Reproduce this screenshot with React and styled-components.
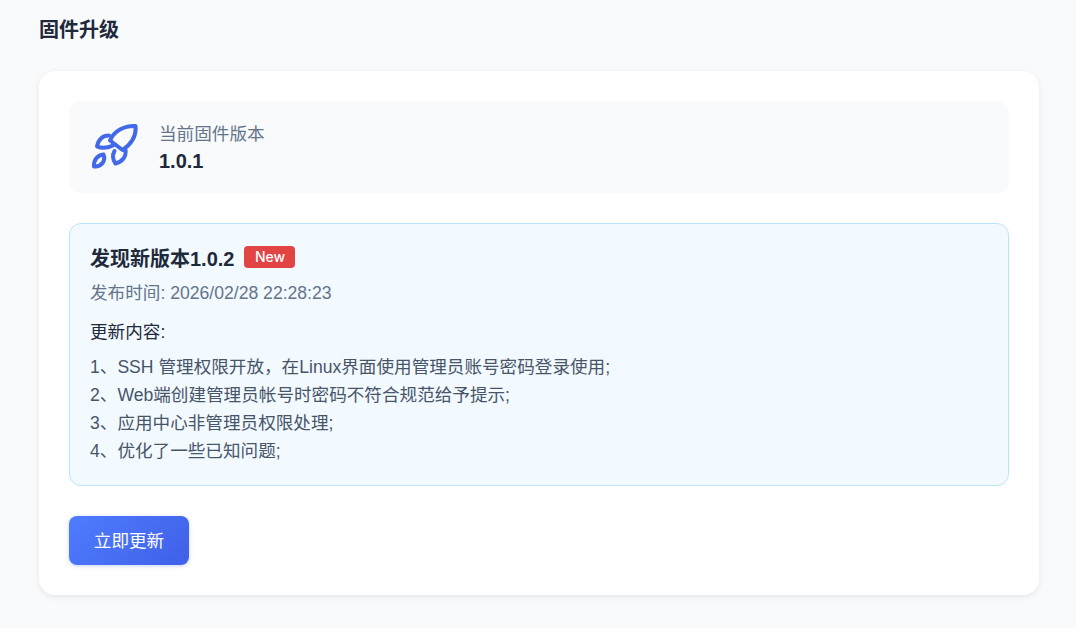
import React from "react";
import styled, { createGlobalStyle } from "styled-components";

const notes = [
  "1、SSH 管理权限开放，在Linux界面使用管理员账号密码登录使用;",
  "2、Web端创建管理员帐号时密码不符合规范给予提示;",
  "3、应用中心非管理员权限处理;",
  "4、优化了一些已知问题;",
];

const App = () => {
  return (
    <>
      <GlobalStyle />
      <Page>
        <Title>固件升级</Title>
        <Card>
          <Current>
            <RocketIcon viewBox="91 123 48 48" fill="none">
              <path d="M135.500 126C136.500 135 132 143.500 122.500 150L110 140.500C114 131 124 125.500 135.500 126Z" />
              <path d="M109 135.500C103 135.500 98.500 139.500 97 146.500C101.500 148.500 107.500 148 113 145.500" />
              <path d="M125.500 150C126.500 156.500 122.500 161.500 115.500 163.500C113 160 112 155.500 114.500 151" />
              <path d="M94 166.500C93.500 160 97.500 155 103.500 154.500C106 160.500 101.500 167 94 166.500Z" />
            </RocketIcon>
            <div>
              <CurrentLabel>当前固件版本</CurrentLabel>
              <CurrentValue>1.0.1</CurrentValue>
            </div>
          </Current>
          <Update>
            <UpdateHead>
              <UpdateTitle>发现新版本1.0.2</UpdateTitle>
              <Badge>New</Badge>
            </UpdateHead>
            <Published>发布时间: 2026/02/28 22:28:23</Published>
            <NotesTitle>更新内容:</NotesTitle>
            {notes.map((note) => (
              <Note key={note}>{note}</Note>
            ))}
          </Update>
          <UpdateButton>立即更新</UpdateButton>
        </Card>
      </Page>
    </>
  );
};

export default App;

const GlobalStyle = createGlobalStyle`
  html, body {
    margin: 0;
    padding: 0;
    background: #f8fafc;
  }
  body {
    font-family: "Liberation Sans", "Noto Sans CJK SC", sans-serif;
  }
  * {
    box-sizing: border-box;
  }
`;
const Page = styled.div`
  width: 1076px;
  height: 628px;
  padding: 15px 37px 0 39px;
  overflow: hidden;
`;
const Title = styled.div`
  height: 30px;
  line-height: 30px;
  font-size: 20px;
  font-weight: 700;
  color: #1e293b;
  margin-bottom: 26px;
`;
const Card = styled.div`
  width: 1000px;
  height: 524px;
  padding: 30px;
  background: #fff;
  border-radius: 16px;
  box-shadow: 0 2px 6px rgba(15, 23, 42, 0.08);
`;
const Current = styled.div`
  height: 92px;
  display: flex;
  align-items: center;
  gap: 20px;
  padding: 0 22px;
  background: #f8fafc;
  border-radius: 12px;
  margin-bottom: 30px;
`;
const RocketIcon = styled.svg`
  width: 48px;
  height: 48px;
  flex-shrink: 0;
  stroke: #4169e8;
  stroke-width: 4;
  stroke-linecap: round;
  stroke-linejoin: round;
`;
const CurrentLabel = styled.div`
  font-size: 17.6px;
  line-height: 28px;
  padding-top: 1px;
  color: #64748b;
`;
const CurrentValue = styled.div`
  font-size: 20px;
  line-height: 27px;
  font-weight: 700;
  color: #1e293b;
`;
const Update = styled.div`
  height: 263px;
  padding: 19px 20px 20px;
  background: #f2f9ff;
  border: 1px solid #bae6fd;
  border-radius: 12px;
  margin-bottom: 30px;
`;
const UpdateHead = styled.div`
  display: flex;
  align-items: center;
  gap: 10px;
  height: 28px;
  margin-bottom: 8px;
`;
const UpdateTitle = styled.div`
  font-size: 20px;
  font-weight: 700;
  color: #1e293b;
`;
const Badge = styled.span`
  width: 51px;
  height: 22px;
  line-height: 22px;
  text-align: center;
  font-family: Inter, "Liberation Sans", sans-serif;
  font-size: 14px;
  font-weight: 500;
  color: #fff;
  background: #e24343;
  border-radius: 4px;
`;
const Published = styled.div`
  font-size: 17.6px;
  line-height: 28px;
  color: #64748b;
  margin-bottom: 11px;
`;
const NotesTitle = styled.div`
  font-size: 17.6px;
  line-height: 28px;
  color: #1e293b;
  margin-bottom: 7px;
`;
const Note = styled.div`
  font-size: 17.6px;
  line-height: 28px;
  color: #475569;
`;
const UpdateButton = styled.button`
  display: block;
  width: 120px;
  height: 49px;
  padding: 0 0 2px;
  border: none;
  border-radius: 8px;
  background: linear-gradient(135deg, #4f7cff, #3f60e8);
  box-shadow: 0 1px 4px rgba(65, 105, 232, 0.3);
  color: #fff;
  font-family: inherit;
  font-size: 17.6px;
`;
